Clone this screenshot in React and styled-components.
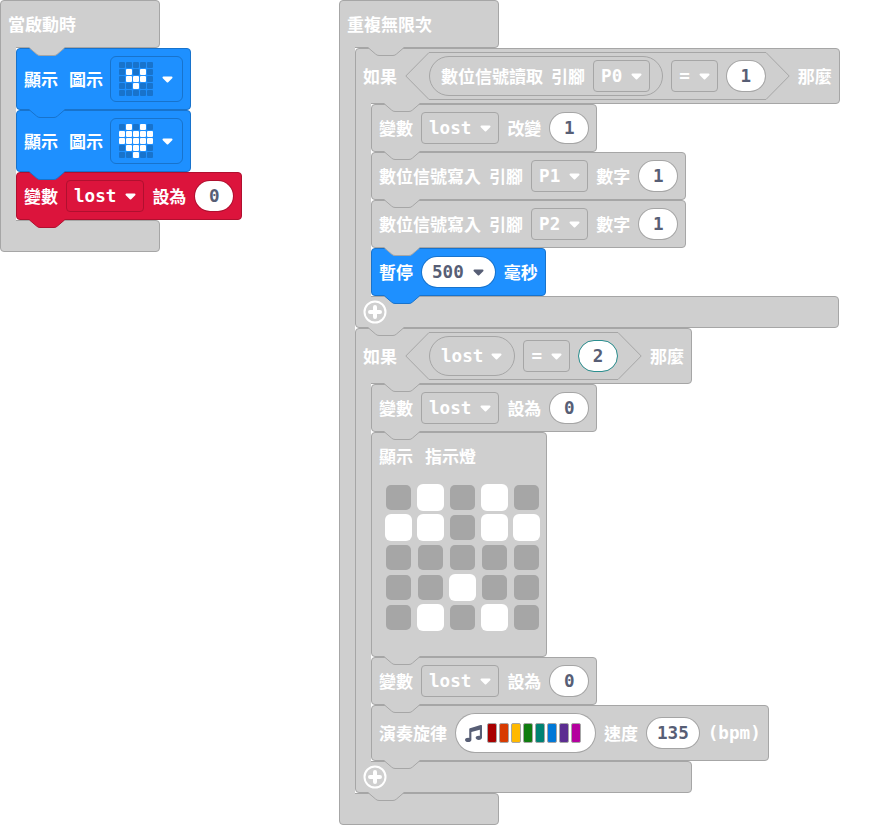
import React from 'react';
import styled, { createGlobalStyle } from 'styled-components';
import { FaMusic } from 'react-icons/fa';

const tones = {
  grey: { fill: '#cfcfcf', line: '#a6a6a6' },
  blue: { fill: '#1e90ff', line: '#1873cc' },
  red: { fill: '#dc143c', line: '#b0102f' },
};

const Global = createGlobalStyle`
  html, body {
    margin: 0;
    background: #fff;
  }
  body {
    overflow: hidden;
  }
`;

const Page = styled.div`
  display: flex;
  align-items: flex-start;
  gap: 96px;
  width: 891px;
  height: 825px;
`;

const Column = styled.div`
  display: flex;
  flex-direction: column;
  align-items: flex-start;
  width: ${p => p.$width}px;
`;

const Block = styled.div`
  position: relative;
  box-sizing: border-box;
  display: flex;
  align-items: center;
  gap: 8px;
  width: ${p => (p.$width ? `${p.$width}px` : 'max-content')};
  height: ${p => p.$height || 48}px;
  padding: 0 7px;
  background: ${p => tones[p.$tone || 'grey'].fill};
  border: 1px solid ${p => tones[p.$tone || 'grey'].line};
  border-radius: 4px;
`;

// top part of a block with a mouth, the spine runs on from its left edge
const MouthTop = styled(Block)`
  border-bottom-left-radius: 0;
`;

const MouthEnd = styled(Block)`
  border-top-left-radius: 0;
`;

const LedBlock = styled(Block)`
  display: block;
  width: 176px;
  height: 225px;
`;

const LedTitle = styled.div`
  display: flex;
  align-items: center;
  gap: 12px;
  height: 45px;
`;

const LedGrid = styled.div`
  display: grid;
  grid-template-columns: repeat(5, 25px);
  grid-auto-rows: 25px;
  column-gap: 7px;
  row-gap: 5px;
  padding: 7px 0 0 7px;
`;

const Led = styled.div`
  border-radius: 5px;
  background: ${p => (p.$on ? '#fff' : '#a6a6a6')};
  box-shadow: ${p => (p.$on ? '0 0 0 1px #fff' : 'none')};
`;

const Mouth = styled.div`
  display: flex;
  align-items: stretch;
`;

const Spine = styled.div`
  position: relative;
  z-index: 1;
  box-sizing: border-box;
  width: 16px;
  margin: -1px 0;
  background: ${tones.grey.fill};
  border-left: 1px solid ${tones.grey.line};
`;

const Stack = styled.div`
  display: flex;
  flex-direction: column;
  align-items: flex-start;
`;

const Label = styled.span`
  font: 700 17px "Noto Sans CJK TC", sans-serif;
  color: #fff;
  word-spacing: 4.2px;
  white-space: pre;
  line-height: 20px;
`;

const FieldLabel = styled(Label)`
  margin: 0 -1px 0 3px;
`;

const Mono = styled.span`
  font: 700 17.6px "DejaVu Sans Mono", monospace;
  line-height: 20px;
  color: ${p => p.$color || '#fff'};
  white-space: pre;
`;

const Dropdown = styled.div`
  box-sizing: border-box;
  display: flex;
  align-items: center;
  gap: 9px;
  height: 32px;
  padding: 0 7px;
  border: 1px solid ${p => tones[p.$tone || 'grey'].line};
  border-radius: 4px;
`;

const ImageDropdown = styled(Dropdown)`
  height: 46px;
  padding: 0 9px 0 8px;
  border-radius: 6px;
`;

const Matrix = styled.div`
  display: grid;
  grid-template-columns: repeat(5, 6px);
  grid-auto-rows: 6px;
  gap: 1px;
`;

const Dot = styled.div`
  border-radius: 1px;
  background: ${p => (p.$on ? '#fff' : tones.blue.line)};
`;

const Input = styled.div`
  box-sizing: border-box;
  display: flex;
  align-items: center;
  justify-content: center;
  min-width: 40px;
  height: 32px;
  padding: 0 10px;
  background: #fff;
  background-clip: padding-box;
  border: 1px solid ${p => (p.$focus ? '#2b8f8f' : 'rgba(0, 0, 0, 0.2)')};
  border-radius: 16px;
`;

const ValuePill = styled(Input)`
  gap: 9px;
  padding: 0 11px 0 10px;
`;

const Pill = styled.div`
  box-sizing: border-box;
  display: flex;
  align-items: center;
  gap: 8px;
  height: 40px;
  padding: 0 12px 0 11px;
  border: 1px solid ${tones.grey.line};
  border-radius: 20px;
`;

const Hexagon = styled.div`
  display: flex;
  align-items: stretch;
  height: 48px;
`;

const HexBody = styled.div`
  box-sizing: border-box;
  display: flex;
  align-items: center;
  gap: 8px;
  border-top: 1px solid ${tones.grey.line};
  border-bottom: 1px solid ${tones.grey.line};
`;

const MelodyPill = styled.div`
  box-sizing: border-box;
  display: flex;
  align-items: center;
  gap: 5px;
  height: 40px;
  padding: 0 14px 0 9px;
  background: #fff;
  background-clip: padding-box;
  border: 1px solid rgba(0, 0, 0, 0.2);
  border-radius: 20px;
  color: #575e75;
`;

const Bars = styled.div`
  display: flex;
  gap: 2px;
`;

const Bar = styled.div`
  box-sizing: border-box;
  width: 10px;
  height: 20px;
  border: 1px solid #a6a6a6;
  border-radius: 2px;
  background: ${p => p.$color};
`;

const TabShape = styled.svg`
  position: absolute;
  top: 100%;
  left: ${p => p.$left}px;
  z-index: 2;
  display: block;
`;

const Tab = ({ tone = 'grey', left = 12 }) => (
  <TabShape $left={left} width="36" height="9" viewBox="0 0 36 9">
    <path
      d="M0.5 0 L0.5 1 L7.5 7 Q9 8.5 11 8.5 H25 Q27 8.5 28.5 7 L35.5 1 L35.5 0 Z"
      fill={tones[tone].fill}
    />
    <path
      d="M0.5 1 L7.5 7 Q9 8.5 11 8.5 H25 Q27 8.5 28.5 7 L35.5 1"
      fill="none"
      stroke={tones[tone].line}
    />
  </TabShape>
);

const Caret = ({ color = '#fff' }) => (
  <svg width="11" height="7" viewBox="0 0 11 7">
    <path d="M1.5 1.5 H9.5 L5.5 5.5 Z" fill={color} stroke={color} strokeWidth="2" strokeLinejoin="round" />
  </svg>
);

const HexCap = ({ side }) => (
  <svg width="24" height="48" viewBox="0 0 24 48">
    <path
      d={side === 'left' ? 'M24 0.5 L0.8 24 L24 47.5' : 'M0 0.5 L23.2 24 L0 47.5'}
      fill="none"
      stroke={tones.grey.line}
    />
  </svg>
);

const Plus = () => (
  <svg width="24" height="24" viewBox="0 0 24 24">
    <circle cx="12" cy="12" r="10.5" fill="none" stroke="#fff" strokeWidth="2" />
    <path d="M12 7 V17 M7 12 H17" stroke="#fff" strokeWidth="4" strokeLinecap="round" />
  </svg>
);

const Select = ({ value, tone }) => (
  <Dropdown $tone={tone}>
    <Mono>{value}</Mono>
    <Caret />
  </Dropdown>
);

const Num = ({ value, focus }) => (
  <Input $focus={focus}>
    <Mono $color="#575e75">{value}</Mono>
  </Input>
);

const SMALL_HEART = ['00000', '01010', '01110', '00100', '00000'];
const BIG_HEART = ['01010', '11111', '11111', '01110', '00100'];
const LOST_FACE = ['01010', '11011', '00000', '00100', '01010'];
const MELODY = ['#a80000', '#d83b01', '#ffb900', '#107c10', '#008272', '#0078d7', '#5c2d91', '#b4009e'];

const cells = rows => rows.join('').split('').map(c => c === '1');

const ShowIcon = ({ icon }) => (
  <Block $tone="blue" $height={62}>
    <Label>顯示</Label>
    <FieldLabel>圖示</FieldLabel>
    <ImageDropdown $tone="blue">
      <Matrix>
        {cells(icon).map((on, i) => <Dot key={i} $on={on} />)}
      </Matrix>
      <Caret />
    </ImageDropdown>
    <Tab tone="blue" />
  </Block>
);

const VarRow = ({ verb, value }) => (
  <Block>
    <Label>變數</Label>
    <Select value="lost" />
    <Label>{verb}</Label>
    <Num value={value} />
    <Tab />
  </Block>
);

const WritePin = ({ pin }) => (
  <Block>
    <Label>數位信號寫入 引腳</Label>
    <Select value={pin} />
    <Label>數字</Label>
    <Num value="1" />
    <Tab />
  </Block>
);

const Footer = ({ width }) => (
  <MouthEnd $height={32} $width={width}>
    <Plus />
    <Tab />
  </MouthEnd>
);

const App = () => (
  <Page>
    <Global />
    <Column $width={243}>
      <MouthTop $width={160}>
        <Label>當啟動時</Label>
        <Tab left={28} />
      </MouthTop>
      <Mouth>
        <Spine />
        <Stack>
          <ShowIcon icon={SMALL_HEART} />
          <ShowIcon icon={BIG_HEART} />
          <Block $tone="red">
            <Label>變數</Label>
            <Select value="lost" tone="red" />
            <Label>設為</Label>
            <Num value="0" />
            <Tab tone="red" />
          </Block>
        </Stack>
      </Mouth>
      <MouthEnd $width={160} $height={32} />
    </Column>

    <Column $width={552}>
      <MouthTop $width={160}>
        <Label>重複無限次</Label>
        <Tab left={28} />
      </MouthTop>
      <Mouth>
        <Spine />
        <Stack>
          <MouthTop $height={56}>
            <Label>如果</Label>
            <Hexagon>
              <HexCap side="left" />
              <HexBody>
                <Pill>
                  <Label>數位信號讀取 引腳</Label>
                  <Select value="P0" />
                </Pill>
                <Select value="=" />
                <Num value="1" />
              </HexBody>
              <HexCap side="right" />
            </Hexagon>
            <Label>那麼</Label>
            <Tab left={28} />
          </MouthTop>
          <Mouth>
            <Spine />
            <Stack>
              <VarRow verb="改變" value="1" />
              <WritePin pin="P1" />
              <WritePin pin="P2" />
              <Block $tone="blue">
                <Label>暫停</Label>
                <ValuePill>
                  <Mono $color="#575e75">500</Mono>
                  <Caret color="#575e75" />
                </ValuePill>
                <Label>毫秒</Label>
                <Tab tone="blue" />
              </Block>
            </Stack>
          </Mouth>
          <Footer width={484} />

          <MouthTop $height={56}>
            <Label>如果</Label>
            <Hexagon>
              <HexCap side="left" />
              <HexBody>
                <Pill>
                  <Mono>lost</Mono>
                  <Caret />
                </Pill>
                <Select value="=" />
                <Num value="2" focus />
              </HexBody>
              <HexCap side="right" />
            </Hexagon>
            <Label>那麼</Label>
            <Tab left={28} />
          </MouthTop>
          <Mouth>
            <Spine />
            <Stack>
              <VarRow verb="設為" value="0" />
              <LedBlock>
                <LedTitle>
                  <Label>顯示</Label>
                  <Label>指示燈</Label>
                </LedTitle>
                <LedGrid>
                  {cells(LOST_FACE).map((on, i) => <Led key={i} $on={on} />)}
                </LedGrid>
                <Tab />
              </LedBlock>
              <VarRow verb="設為" value="0" />
              <Block $height={56}>
                <Label>演奏旋律</Label>
                <MelodyPill>
                  <FaMusic size={17} />
                  <Bars>
                    {MELODY.map(c => <Bar key={c} $color={c} />)}
                  </Bars>
                </MelodyPill>
                <Label>速度</Label>
                <Num value="135" />
                <Mono>(bpm)</Mono>
                <Tab />
              </Block>
            </Stack>
          </Mouth>
          <Footer width={337} />
        </Stack>
      </Mouth>
      <MouthEnd $width={160} $height={32} />
    </Column>
  </Page>
);

export default App;
